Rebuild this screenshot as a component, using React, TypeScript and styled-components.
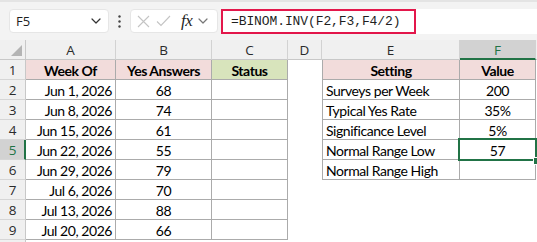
import React from 'react';
import styled, { createGlobalStyle } from 'styled-components';

const GREEN = '#217346';
const BORDER = '#ababab';

const Global = createGlobalStyle`
  html, body { margin: 0; padding: 0; background: #ffffff; }
  body { width: 537px; height: 242px; overflow: hidden; }
`;

const Page = styled.div`
  width: 537px;
  height: 242px;
  overflow: hidden;
  background: #ffffff;
`;

const Toolbar = styled.div`
  height: 40px;
  box-sizing: border-box;
  background: #f3f3f3;
  border-top: 2px solid #e4e4e4;
  padding: 7px 0 0 9px;
  display: flex;
  align-items: flex-start;
`;

const NameBox = styled.div`
  width: 100px;
  height: 24px;
  box-sizing: border-box;
  background: #ffffff;
  border: 1px solid #e6e6e6;
  border-radius: 4px;
  display: flex;
  align-items: center;
  justify-content: space-between;
  padding: 0 7px 0 6px;
  font-family: 'Open Sans', 'Noto Sans', sans-serif;
  font-size: 13px;
  color: #1f1f1f;
`;

const Dots = styled.div`
  width: 21px;
  height: 24px;
  display: flex;
  align-items: center;
  justify-content: center;
`;

const FxBox = styled.div`
  width: 88px;
  height: 24px;
  box-sizing: border-box;
  background: #ffffff;
  border: 1px solid #e6e6e6;
  border-radius: 4px;
  display: flex;
  align-items: center;
  padding: 0 4px 0 6px;
  gap: 6px;
`;

const Fx = styled.span`
  font-family: 'Liberation Serif', 'DejaVu Serif', serif;
  font-style: italic;
  font-size: 17px;
  color: #1f1f1f;
  letter-spacing: -0.5px;
  margin-left: 4px;
`;

const FormulaBar = styled.div`
  flex: 1;
  margin-left: 3px;
  height: 25px;
  background: #ffffff;
  border-radius: 4px 0 0 4px;
  display: flex;
  align-items: stretch;
`;

const Highlight = styled.div`
  width: 195px;
  box-sizing: border-box;
  border: 2px solid #e3174b;
  display: flex;
  align-items: center;
  padding-left: 8px;
  font-family: 'Liberation Mono', 'DejaVu Sans Mono', monospace;
  font-size: 13px;
  letter-spacing: -0.1px;
  color: #1f1f1f;
  white-space: nowrap;
`;

const Sheet = styled.div`
  position: relative;
  display: grid;
  grid-template-columns: 26px 90px 96px 76px 34px 138px 76px 1fr;
  grid-auto-rows: 20px;
`;

const Corner = styled.div`
  background: #f0f0f0;
  border-right: 1px solid #c8c8c8;
  border-bottom: 1px solid #c8c8c8;
  box-sizing: border-box;
  display: flex;
  align-items: flex-end;
  justify-content: flex-end;
  padding: 0 3px 3px 0;
`;

const ColHead = styled.div<{ $sel?: boolean }>`
  box-sizing: border-box;
  background: ${p => (p.$sel ? '#d2d2d2' : '#f0f0f0')};
  border-right: 1px solid #d2d2d2;
  border-bottom: ${p => (p.$sel ? `2px solid ${GREEN}` : '1px solid #c8c8c8')};
  display: flex;
  align-items: center;
  justify-content: center;
  font-family: 'Open Sans', 'Noto Sans', sans-serif;
  font-size: 13.5px;
  color: ${p => (p.$sel ? GREEN : '#2b2b2b')};
  padding-top: ${p => (p.$sel ? '1px' : '0')};
`;

const RowHead = styled.div<{ $sel?: boolean }>`
  box-sizing: border-box;
  background: ${p => (p.$sel ? '#d2d2d2' : '#f0f0f0')};
  border-right: ${p => (p.$sel ? `2px solid ${GREEN}` : '1px solid #c8c8c8')};
  border-bottom: 1px solid #d6d6d6;
  display: flex;
  align-items: center;
  justify-content: center;
  font-family: 'Open Sans', 'Noto Sans', sans-serif;
  font-size: 13.5px;
  color: ${p => (p.$sel ? GREEN : '#2b2b2b')};
  padding-left: ${p => (p.$sel ? '1px' : '0')};
`;

type Align = 'left' | 'center' | 'right';

const Cell = styled.div<{ $align?: Align; $bg?: string; $bold?: boolean; $border?: boolean; $left?: boolean }>`
  box-sizing: border-box;
  background: ${p => p.$bg || '#ffffff'};
  border-right: ${p => (p.$border ? `1px solid ${BORDER}` : 'none')};
  border-bottom: ${p => (p.$border ? `1px solid ${BORDER}` : 'none')};
  border-left: ${p => (p.$left ? `1px solid ${BORDER}` : 'none')};
  display: flex;
  align-items: center;
  justify-content: ${p => (p.$align === 'left' ? 'flex-start' : p.$align === 'right' ? 'flex-end' : 'center')};
  padding: 1px 3px 0 3px;
  font-family: Lato, 'Open Sans', sans-serif;
  font-size: 14px;
  letter-spacing: -0.45px;
  font-weight: ${p => (p.$bold ? 700 : 400)};
  color: #000000;
  white-space: nowrap;
  overflow: hidden;
`;

const Selection = styled.div`
  position: absolute;
  left: 458px;
  top: 98px;
  width: 79px;
  height: 23px;
  box-sizing: border-box;
  border: 2px solid ${GREEN};
  pointer-events: none;
`;

const Handle = styled.div`
  position: absolute;
  left: 533px;
  top: 117px;
  width: 6px;
  height: 6px;
  background: ${GREEN};
  border: 1px solid #ffffff;
`;

const PINK = '#f2dcdb';
const LIME = '#d8e4bc';

const left = [
  ['Jun 1, 2026', '68'],
  ['Jun 8, 2026', '74'],
  ['Jun 15, 2026', '61'],
  ['Jun 22, 2026', '55'],
  ['Jun 29, 2026', '79'],
  ['Jul 6, 2026', '70'],
  ['Jul 13, 2026', '88'],
  ['Jul 20, 2026', '66'],
];

const settings: [string, string][] = [
  ['Surveys per Week', '200'],
  ['Typical Yes Rate', '35%'],
  ['Significance Level', '5%'],
  ['Normal Range Low', '57'],
  ['Normal Range High', ''],
];

const ChevronDown = ({ color = '#444' }: { color?: string }) => (
  <svg width="10" height="6" viewBox="0 0 10 6">
    <path d="M1 1 L5 5 L9 1" fill="none" stroke={color} strokeWidth="1.2" strokeLinecap="round" strokeLinejoin="round" />
  </svg>
);

export default function App() {
  const rows: React.ReactNode[] = [];
  for (let r = 0; r < 9; r++) {
    const n = r + 1;
    rows.push(<RowHead key={`h${n}`} $sel={n === 5}>{n}</RowHead>);
    if (r === 0) {
      rows.push(<Cell key="a1" $bg={PINK} $bold $border>Week Of</Cell>);
      rows.push(<Cell key="b1" $bg={PINK} $bold $border>Yes Answers</Cell>);
      rows.push(<Cell key="c1" $bg={LIME} $bold $border>Status</Cell>);
    } else {
      const [d, v] = left[r - 1];
      rows.push(<Cell key={`a${n}`} $align="right" $border>{d}</Cell>);
      rows.push(<Cell key={`b${n}`} $border>{v}</Cell>);
      rows.push(<Cell key={`c${n}`} $border />);
    }
    rows.push(<Cell key={`d${n}`} />);
    if (r === 0) {
      rows.push(<Cell key="e1" $bg={PINK} $bold $border $left>Setting</Cell>);
      rows.push(<Cell key="f1" $bg={PINK} $bold $border>Value</Cell>);
    } else if (r <= 5) {
      const [s, v] = settings[r - 1];
      rows.push(<Cell key={`e${n}`} $align="left" $border $left>{s}</Cell>);
      rows.push(<Cell key={`f${n}`} $border>{v}</Cell>);
    } else {
      rows.push(<Cell key={`e${n}`} />);
      rows.push(<Cell key={`f${n}`} />);
    }
    rows.push(<Cell key={`g${n}`} />);
  }
  rows.push(<RowHead key="h10" />);

  return (
    <Page>
      <Global />
      <Toolbar>
        <NameBox>
          <span>F5</span>
          <ChevronDown color="#333" />
        </NameBox>
        <Dots>
          <svg width="3" height="13" viewBox="0 0 3 13">
            <circle cx="1.5" cy="1.5" r="1.2" fill="#444" />
            <circle cx="1.5" cy="6.5" r="1.2" fill="#444" />
            <circle cx="1.5" cy="11.5" r="1.2" fill="#444" />
          </svg>
        </Dots>
        <FxBox>
          <svg width="13" height="13" viewBox="0 0 13 13">
            <path d="M1 1 L12 12 M12 1 L1 12" stroke="#c4c4c4" strokeWidth="1.1" fill="none" />
          </svg>
          <svg width="15" height="12" viewBox="0 0 15 12">
            <path d="M1 6.5 L5 10.5 L14 1" stroke="#c4c4c4" strokeWidth="1.1" fill="none" />
          </svg>
          <Fx>fx</Fx>
          <ChevronDown color="#777" />
        </FxBox>
        <FormulaBar>
          <Highlight>=BINOM.INV(F2,F3,F4/2)</Highlight>
        </FormulaBar>
      </Toolbar>
      <Sheet>
        <Corner>
          <svg width="11" height="11" viewBox="0 0 11 11">
            <path d="M11 0 L11 11 L0 11 Z" fill="#b4b4b4" />
          </svg>
        </Corner>
        <ColHead>A</ColHead>
        <ColHead>B</ColHead>
        <ColHead>C</ColHead>
        <ColHead>D</ColHead>
        <ColHead>E</ColHead>
        <ColHead $sel>F</ColHead>
        <ColHead />
        {rows}
        <Selection />
        <Handle />
      </Sheet>
    </Page>
  );
}
